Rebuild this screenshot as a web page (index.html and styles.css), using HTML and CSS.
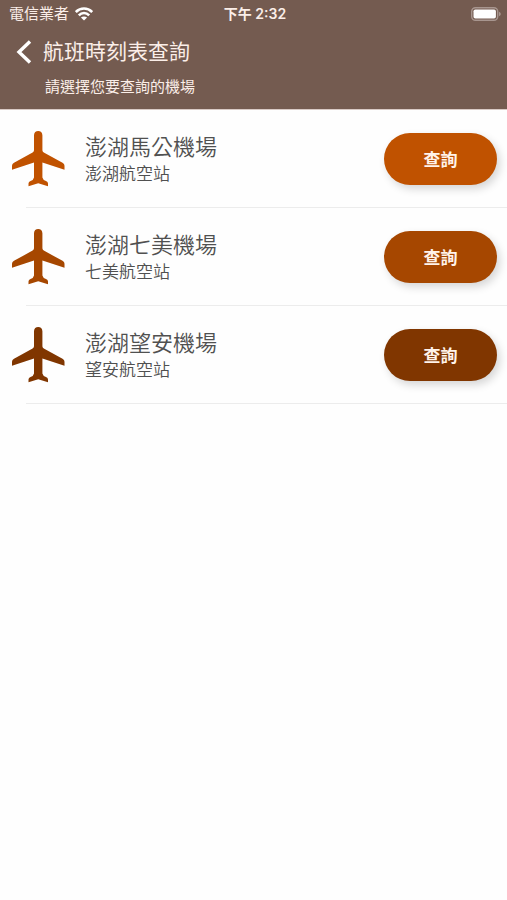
FILE: index.html
```html
<!DOCTYPE html>
<html lang="zh-Hant">
<head>
<meta charset="utf-8">
<meta name="viewport" content="width=device-width, initial-scale=1">
<title>航班時刻表查詢</title>
<link rel="stylesheet" href="styles.css">
</head>
<body>
<svg class="sprite" aria-hidden="true">
  <symbol id="plane" viewBox="0 0 53 56">
    <path d="M22 4.200C22 1.600 23.800 0 26.200 0S30.400 1.600 30.400 4.200V19.300Q30.400 20.800 31.800 21.600L50.500 31.800Q52.500 33 52.500 34.800V38.700L30.400 31.600V46.600Q31 49.300 34 50Q36 50.600 36 52.500V55.300L26.200 52.300L16.500 55.300V52.500Q16.500 50.600 18.500 50Q21.500 49.300 22 46.600V31.600L0 38.700V34.800Q0 33 2 31.800L20.600 21.600Q22 20.800 22 19.300Z"/>
  </symbol>
</svg>
<header class="header">
  <div class="status">
    <div class="carrier">
      <span>電信業者</span>
      <svg class="wifi" viewBox="0 0 18 14" aria-hidden="true">
        <path d="M.8 5C5.500 .4 12.500 .4 17.200 5M3.800 8.300C6.800 5.300 11.200 5.300 14.200 8.300"/>
        <path class="dot" d="M9 13.600L5.900 10.600C7.700 9 10.300 9 12.100 10.600Z"/>
      </svg>
    </div>
    <time class="clock">下午 2:32</time>
    <svg class="battery" viewBox="0 0 30 14" aria-hidden="true">
      <rect class="case" x=".7" y=".7" width="26" height="12.600" rx="3.800"/>
      <rect class="charge" x="2.500" y="2.500" width="22.400" height="9" rx="1.800"/>
      <path class="tip" d="M28 4.800C30.300 5.600 30.300 8.400 28 9.200Z"/>
    </svg>
  </div>
  <div class="titlebar">
    <a class="back" href="#" aria-label="返回">
      <svg viewBox="0 0 16 24" aria-hidden="true"><path d="M14 1.500L3 12L14 22.500"/></svg>
    </a>
    <h1 class="title">航班時刻表查詢</h1>
  </div>
  <p class="hint">請選擇您要查詢的機場</p>
</header>
<main>
  <ul class="airports">
    <li class="airport magong">
      <svg class="plane" aria-hidden="true"><use href="#plane"/></svg>
      <div class="info">
        <h2 class="name">澎湖馬公機場</h2>
        <p class="station">澎湖航空站</p>
      </div>
      <button class="query" type="button">查詢</button>
    </li>
    <li class="airport qimei">
      <svg class="plane" aria-hidden="true"><use href="#plane"/></svg>
      <div class="info">
        <h2 class="name">澎湖七美機場</h2>
        <p class="station">七美航空站</p>
      </div>
      <button class="query" type="button">查詢</button>
    </li>
    <li class="airport wangan">
      <svg class="plane" aria-hidden="true"><use href="#plane"/></svg>
      <div class="info">
        <h2 class="name">澎湖望安機場</h2>
        <p class="station">望安航空站</p>
      </div>
      <button class="query" type="button">查詢</button>
    </li>
  </ul>
</main>
</body>
</html>
```
FILE: styles.css
```css
* {
  box-sizing: border-box;
}

body {
  margin: 0;
  background: #fefefe;
  color: #505050;
  font-family: Inter, "Noto Sans CJK TC", sans-serif;
}

h1, h2, p, ul {
  margin: 0;
  padding: 0;
  font-weight: 350;
}

.sprite {
  display: none;
}

.header {
  padding-bottom: 12px;
  background: #745b50;
  border-bottom: 1px solid #d9cac5;
  color: #fbeee8;
}

.status {
  display: grid;
  grid-template-columns: 1fr auto 1fr;
  align-items: center;
  height: 28px;
  padding: 0 6px 0 9px;
  font-size: 15px;
  line-height: 28px;
}

.carrier {
  display: flex;
  align-items: center;
  gap: 6px;
}

.wifi {
  width: 18px;
  height: 14px;
  fill: none;
  stroke: #fff;
  stroke-width: 2.600;
}

.wifi .dot {
  fill: #fff;
  stroke: none;
}

.clock {
  font-size: 14px;
  font-weight: 600;
}

.battery {
  justify-self: end;
  width: 30px;
  height: 14px;
}

.case {
  fill: none;
  stroke: #a8968f;
  stroke-width: 1.400;
}

.charge {
  fill: #fff;
}

.tip {
  fill: #a8968f;
}

.titlebar {
  display: flex;
  align-items: center;
  gap: 11px;
  height: 48px;
  padding-left: 16px;
}

.back {
  display: flex;
}

.back svg {
  width: 16px;
  height: 24px;
  fill: none;
  stroke: #fff;
  stroke-width: 3.400;
}

.title {
  font-size: 21px;
  font-weight: 400;
  line-height: 28px;
}

.hint {
  padding-left: 45px;
  font-size: 15px;
  font-weight: 400;
  line-height: 21px;
}

.airports {
  list-style: none;
}

.airport {
  display: flex;
  align-items: center;
  height: 98px;
  padding: 0 10px 0 12px;
  background: linear-gradient(#ececec, #ececec) 26px 100% / 100% 1px no-repeat;
}

.plane {
  flex: none;
  width: 53px;
  height: 56px;
  fill: var(--tone);
}

.info {
  flex: 1;
  padding: 2px 0 0 20px;
}

.name {
  font-size: 22px;
  line-height: 28px;
}

.station {
  font-size: 17px;
  line-height: 26px;
}

.query {
  width: 113px;
  height: 52px;
  border: 0;
  border-radius: 26px;
  background: var(--tone);
  box-shadow: 3px 4px 8px rgba(0, 0, 0, 0.16);
  color: #fff3ea;
  font: 700 17px/24px "Noto Sans CJK TC", sans-serif;
}

.magong {
  --tone: #c05200;
}

.qimei {
  --tone: #a64700;
}

.wangan {
  --tone: #803600;
}
```
